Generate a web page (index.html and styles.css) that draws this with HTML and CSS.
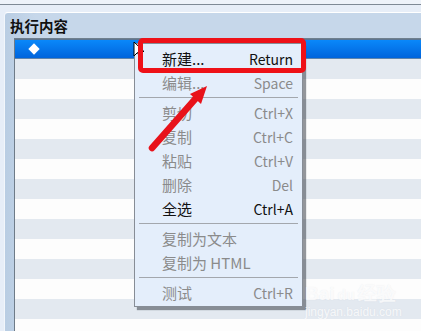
FILE: index.html
```html
<!DOCTYPE html>
<html>
<head>
  <meta charset="utf-8">
  <title>执行内容</title>
  <link rel="stylesheet" href="styles.css">
</head>
<body>
  <div class="topbar"></div>

  <div class="panel">
    <div class="panel-title">执行内容</div>
    <div class="list">
      <div class="row selected"><span class="diamond"></span></div>
      <div class="row alt"></div>
      <div class="row"></div>
      <div class="row alt"></div>
      <div class="row"></div>
      <div class="row alt"></div>
      <div class="row"></div>
      <div class="row alt"></div>
      <div class="row"></div>
      <div class="row alt"></div>
      <div class="row"></div>
      <div class="row alt"></div>
      <div class="row"></div>
      <div class="row alt"></div>
      <div class="row"></div>
    </div>
  </div>

  <!-- 右键菜单 -->
  <div class="menu">
    <div class="item"><span>新建...</span><span class="key">Return</span></div>
    <div class="item off"><span>编辑...</span><span class="key">Space</span></div>
    <div class="sep"></div>
    <div class="item off"><span>剪切</span><span class="key">Ctrl+X</span></div>
    <div class="item off"><span>复制</span><span class="key">Ctrl+C</span></div>
    <div class="item off"><span>粘贴</span><span class="key">Ctrl+V</span></div>
    <div class="item off"><span>删除</span><span class="key">Del</span></div>
    <div class="item"><span>全选</span><span class="key">Ctrl+A</span></div>
    <div class="sep"></div>
    <div class="item off"><span>复制为文本</span></div>
    <div class="item off"><span>复制为 HTML</span></div>
    <div class="sep"></div>
    <div class="item off"><span>测试</span><span class="key">Ctrl+R</span></div>
  </div>

  <svg class="cursor" width="12" height="18" viewBox="0 0 12 18">
    <path d="M1 1 L1 15 L4.5 11.5 L7 17 L9 16 L6.5 10.5 L11 10.5 Z" fill="#fff" stroke="#000" stroke-width="1"/>
  </svg>

  <div class="highlight"></div>

  <svg class="arrow" width="421" height="331" viewBox="0 0 421 331">
    <line x1="152" y1="148" x2="197" y2="97" stroke="#e8121a" stroke-width="6.5" stroke-linecap="round"/>
    <polygon points="207,86 190,94 201,104" fill="#e8121a"/>
  </svg>

  <div class="watermark">
    <div class="wm-logo">Bai<span class="paw">du</span>经验</div>
    <div class="wm-url">jingyan.baidu.com</div>
  </div>
</body>
</html>
```

FILE: styles.css
```css
* {
  margin: 0;
  padding: 0;
  box-sizing: border-box;
}

body {
  width: 421px;
  height: 331px;
  overflow: hidden;
  background: #e7eef8;
  font-family: "Noto Sans CJK SC", "Noto Sans", sans-serif;
  position: relative;
}

.topbar {
  height: 5px;
  background: #eef3fa;
  border-bottom: 1px solid #7f8a96;
}

.panel {
  margin: 7px 0 0 4px;
  height: 319px;
  background: linear-gradient(to right, #b9cde3, #c6d7ea 30px);
  border-top: 1px solid #ffffff;
  border-left: 1px solid #f2f6fb;
  border-radius: 4px 0 0 0;
  padding-left: 9px;
  overflow: hidden;
}

.panel-title {
  height: 25px;
  line-height: 25px;
  margin-left: -4px;
  font-size: 14.5px;
  font-weight: bold;
  color: #111;
}

.list {
  border-top: 1px solid #6f7f8e;
  border-left: 1px solid #6e7b88;
}

.row {
  height: 20px;
  background: #fdfdfd;
}

.row.alt {
  background: #e3e9f0;
}

.row.selected {
  background: linear-gradient(to bottom, #0a88fa, #0064dc);
  border-top: 1px solid #5d7590;
  border-bottom: 1px solid #5e84ad;
  display: flex;
  align-items: center;
}

/* 白色菱形标记 */
.diamond {
  width: 8px;
  height: 8px;
  background: #fff;
  transform: rotate(45deg);
  margin-left: 15px;
}

/* 右键菜单 */
.menu {
  position: absolute;
  left: 134px;
  top: 43px;
  width: 169px;
  background: #e4eefb;
  border: 1px solid #878d96;
  box-shadow: 3px 3px 1px rgba(60, 66, 74, 0.55);
  padding: 3px 0 1px;
}

.item {
  height: 24px;
  line-height: 24px;
  display: flex;
  justify-content: space-between;
  padding: 0 9px 0 27px;
  font-size: 15px;
  color: #111;
}

.item.off {
  color: #8b8b8b;
}

.key {
  font-size: 14px;
}

.sep {
  height: 1px;
  margin: 2px 4px 3px;
  background: #a3a7ad;
}

.cursor {
  position: absolute;
  left: 133px;
  top: 41px;
}

.highlight {
  position: absolute;
  left: 138px;
  top: 38px;
  width: 168px;
  height: 35px;
  border: 5px solid #ee1118;
  border-radius: 5px;
}

.arrow {
  position: absolute;
  left: 0;
  top: 0;
}

.watermark {
  position: absolute;
  left: 305px;
  top: 283px;
  color: rgba(255, 255, 255, 0.8);
  text-shadow: 0 0 1px rgba(170, 180, 195, 0.25);
}

.wm-logo {
  font-family: "Liberation Sans", sans-serif;
  font-size: 19px;
  font-weight: bold;
  line-height: 22px;
}

.paw {
  font-size: 14px;
  margin: 0 3px;
}

.wm-url {
  font-family: "Liberation Sans", sans-serif;
  font-size: 12px;
  line-height: 12px;
}
```
